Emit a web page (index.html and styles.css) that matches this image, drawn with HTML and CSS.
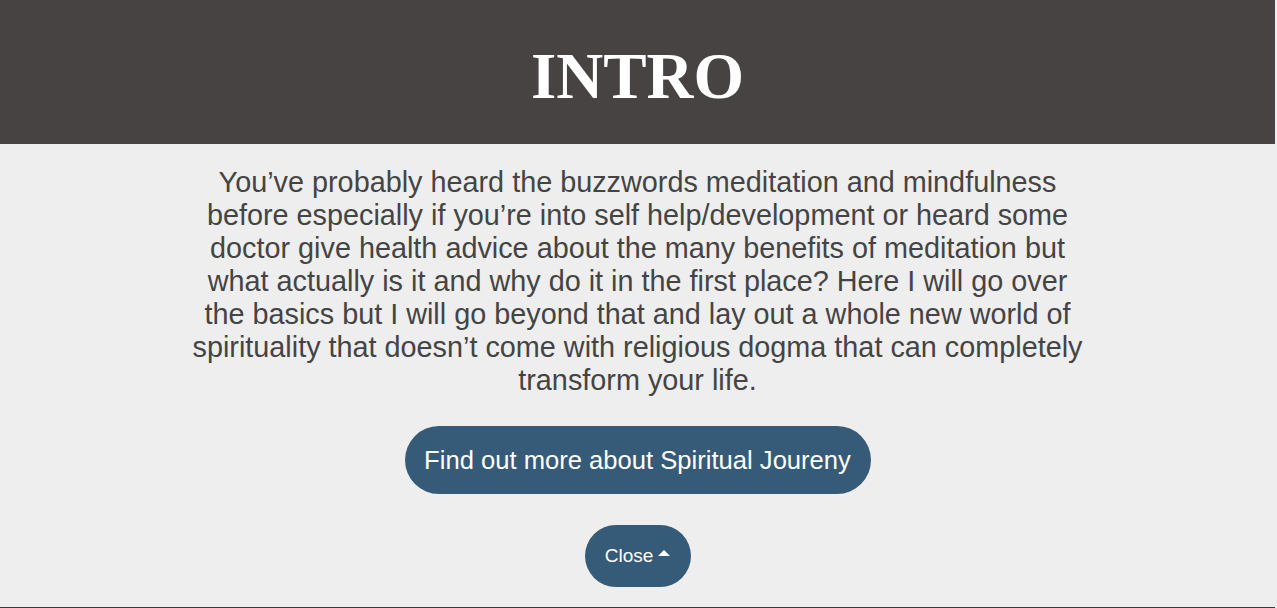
FILE: index.html
```html
<!DOCTYPE html>
<html>
<head>
<meta charset="utf-8">
<link rel="stylesheet" href="styles.css">
</head>
<body>
<header class="banner">
  <h1 class="title">INTRO</h1>
</header>
<main class="intro">
  <p class="lead">You’ve probably heard the buzzwords meditation and mindfulness before especially if you’re into self help/development or heard some doctor give health advice about the many benefits of meditation but what actually is it and why do it in the first place? Here I will go over the basics but I will go beyond that and lay out a whole new world of spirituality that doesn’t come with religious dogma that can completely transform your life.</p>
  <a class="btn btn-more" href="#">Find out more about Spiritual Joureny</a>
  <a class="btn btn-close" href="#">Close <span class="caret"></span></a>
</main>
</body>
</html>
```
FILE: styles.css
```css
html, body {
  margin: 0;
  padding: 0;
}
body {
  background: #eeeeee;
  font-family: "Liberation Sans", Arial, sans-serif;
  width: 1275px;
  height: 607px;
  border-bottom: 1px solid #3a3a3a;
  overflow: hidden;
}
.banner {
  background: #474342;
  height: 144px;
  display: flex;
  align-items: center;
  justify-content: center;
}
.title {
  margin: 0;
  color: #ffffff;
  font-family: "Liberation Serif", "Times New Roman", serif;
  font-weight: bold;
  font-size: 65px;
  line-height: 1;
  padding-top: 8px;
}
.intro {
  display: flex;
  flex-direction: column;
  align-items: center;
}
.lead {
  margin: 22px 0 0;
  width: 900px;
  text-align: center;
  color: #444444;
  font-size: 28.8px;
  line-height: 33px;
}
.btn {
  display: flex;
  align-items: center;
  justify-content: center;
  background: #365b78;
  color: #ffffff;
  text-decoration: none;
}
.btn-more {
  margin-top: 29px;
  width: 466px;
  height: 68px;
  border-radius: 34px;
  font-size: 25.6px;
}
.btn-close {
  margin-top: 31px;
  width: 106px;
  height: 62px;
  border-radius: 31px;
  font-size: 19px;
  gap: 5px;
}
.caret {
  width: 0;
  height: 0;
  border-left: 6px solid transparent;
  border-right: 6px solid transparent;
  border-bottom: 6px solid #ffffff;
  margin-top: -7px;
}
```
